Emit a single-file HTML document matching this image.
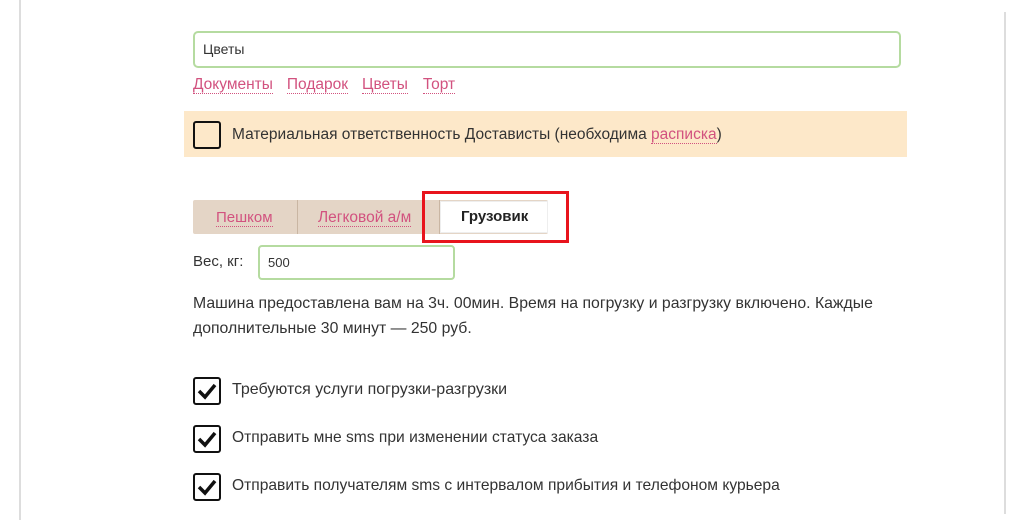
<!DOCTYPE html>
<html><head><meta charset="utf-8"><style>
body{margin:0;width:1024px;height:529px;background:#fff;position:relative;overflow:hidden;font-family:"Liberation Sans","DejaVu Sans",sans-serif;font-size:14px;color:#333}
.a{position:absolute}
.lnk{color:#d2527f;border-bottom:1px dotted #d2527f;line-height:15px}
.cb{position:absolute;left:193px;width:24px;height:24px;border:2.5px solid #111;border-radius:3px;background:#fff}
.cb svg{position:absolute;left:1px;top:1px}
</style></head><body>
<div class="a" style="left:19px;top:0;width:2px;height:520px;background:#ddd"></div>
<div class="a" style="left:1004px;top:12px;width:2px;height:502px;background:#ddd"></div>
<div class="a" style="left:193px;top:31px;width:704px;height:33px;border:2px solid #b5dba0;border-radius:5px"></div>
<div class="a" style="left:203px;top:41px">Цветы</div>
<div class="a" style="left:193px;top:76px;font-size:15.5px"><span class="lnk">Документы</span><span class="lnk" style="margin-left:14px">Подарок</span><span class="lnk" style="margin-left:14px">Цветы</span><span class="lnk" style="margin-left:15px">Торт</span></div>
<div class="a" style="left:184px;top:111px;width:723px;height:46px;background:#fde8c9"></div>
<div class="cb" style="top:121px;background:#fde8c9"></div>
<div class="a" style="left:232px;top:126px;font-size:15.5px">Материальная ответственность Достависты (необходима <span class="lnk">расписка</span>)</div>
<div class="a" style="left:193px;top:200px;width:355px;height:34px;background:#e4d5c6;border-radius:2px"></div>
<div class="a" style="left:297px;top:200px;width:1px;height:34px;background:#c9b6a3"></div>
<div class="a" style="left:439px;top:200px;width:1px;height:34px;background:#c9b6a3"></div>
<div class="a" style="left:216px;top:209px;font-size:15px"><span class="lnk">Пешком</span></div>
<div class="a" style="left:318px;top:209px;font-size:15.5px"><span class="lnk">Легковой а/м</span></div>
<div class="a" style="left:440px;top:201px;width:108px;height:32px;background:#fff;border:1px solid #eee;box-sizing:border-box"></div>
<div class="a" style="left:461px;top:208px;font-weight:bold;color:#222;font-size:15px">Грузовик</div>
<div class="a" style="left:422px;top:191px;width:141px;height:46px;border:3px solid #e8141d"></div>
<div class="a" style="left:193px;top:253px;font-size:15px">Вес, кг:</div>
<div class="a" style="left:258px;top:245px;width:193px;height:31px;border:2px solid #b5dba0;border-radius:4px"></div>
<div class="a" style="left:268px;top:255px;font-size:13px">500</div>
<div class="a" style="left:193px;top:291px;width:720px;line-height:25px;font-size:15.8px">Машина предоставлена вам на 3ч. 00мин. Время на погрузку и разгрузку включено. Каждые дополнительные 30 минут — 250 руб.</div>
<div class="cb" style="top:377px"><svg width="22" height="22"><path d="M3 11 L9 17 L19 5" stroke="#111" stroke-width="3.5" fill="none"/></svg></div>
<div class="a" style="left:232px;top:381px;font-size:16px">Требуются услуги погрузки-разгрузки</div>
<div class="cb" style="top:425px"><svg width="22" height="22"><path d="M3 11 L9 17 L19 5" stroke="#111" stroke-width="3.5" fill="none"/></svg></div>
<div class="a" style="left:232px;top:429px;font-size:15.6px">Отправить мне sms при изменении статуса заказа</div>
<div class="cb" style="top:473px"><svg width="22" height="22"><path d="M3 11 L9 17 L19 5" stroke="#111" stroke-width="3.5" fill="none"/></svg></div>
<div class="a" style="left:232px;top:477px;font-size:15.6px">Отправить получателям sms с интервалом прибытия и телефоном курьера</div>
</body></html>
